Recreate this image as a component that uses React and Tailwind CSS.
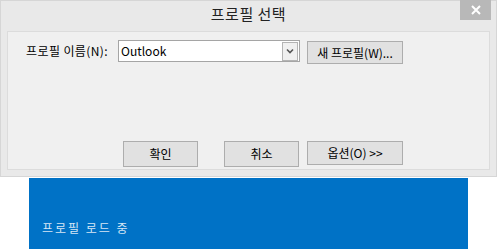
import React from "react";

const font = { fontFamily: '"Noto Sans CJK KR", "Noto Sans", sans-serif' };

function Btn({ children, className = "" }) {
  return (
    <div
      className={`flex items-center justify-center border border-[#adadad] bg-[#e1e1e1] text-[12px] text-black ${className}`}
    >
      {children}
    </div>
  );
}

export default function App() {
  return (
    <div className="flex h-[249px] w-[497px] flex-col bg-white" style={font}>
      <div className="flex h-[177px] w-[497px] flex-col border border-[#d6d6d6] bg-[#e9e9e9]">
        <div className="grid h-[30px] grid-cols-[1fr_auto_1fr]">
          <div />
          <div className="pt-[3px] text-[15px] leading-[20px] tracking-[0.5px] text-[#222]">프로필 선택</div>
          <div className="flex justify-end pr-[5px]">
            <div className="flex h-[20px] w-[31px] items-center justify-center bg-[#b8b8b8] -mt-px">
              <svg width="10" height="10" viewBox="0 0 10 10">
                <path d="M1 1 L9 9 M9 1 L1 9" stroke="#ffffff" strokeWidth="2" />
              </svg>
            </div>
          </div>
        </div>
        <div className="mx-[6px] flex h-[139px] flex-col border border-[#dcdcdc] bg-[#f0f0f0]">
          <div className="mt-[8px] flex items-start">
            <div className="flex h-[22px] w-[110px] items-center pl-[18px] text-[12px] tracking-[0.4px] text-black">
              프로필 이름(N):
            </div>
            <div className="flex h-[22px] w-[182px] items-center justify-between border border-[#a5a5a5] bg-white pl-[2px] pr-px">
              <span className="text-[12px] text-black">Outlook</span>
              <div className="flex h-[19px] w-[16px] items-center justify-center border border-[#b4b4b4] bg-[#f0f0f0]">
                <svg width="8" height="6" viewBox="0 0 8 6">
                  <path d="M1 1.5 L4 4.5 L7 1.5" stroke="#555" strokeWidth="1.6" fill="none" />
                </svg>
              </div>
            </div>
            <Btn className="ml-[7px] mt-px h-[23px] w-[96px]">새 프로필(W)...</Btn>
          </div>
          <div className="mt-auto mb-[2px] flex items-start pl-[115px]">
            <Btn className="h-[26px] w-[75px]">확인</Btn>
            <Btn className="ml-[26px] h-[26px] w-[75px]">취소</Btn>
            <Btn className="ml-[8px] h-[24px] w-[96px]">옵션(O) &gt;&gt;</Btn>
          </div>
        </div>
      </div>
      <div className="ml-[29px] mt-px flex w-[439px] flex-1 flex-col justify-end bg-[#0072c6] pb-[12px] pl-[13px]">
        <span className="text-[12px] tracking-[2px] text-[#d6e6f5]">프로필 로드 중</span>
      </div>
    </div>
  );
}
